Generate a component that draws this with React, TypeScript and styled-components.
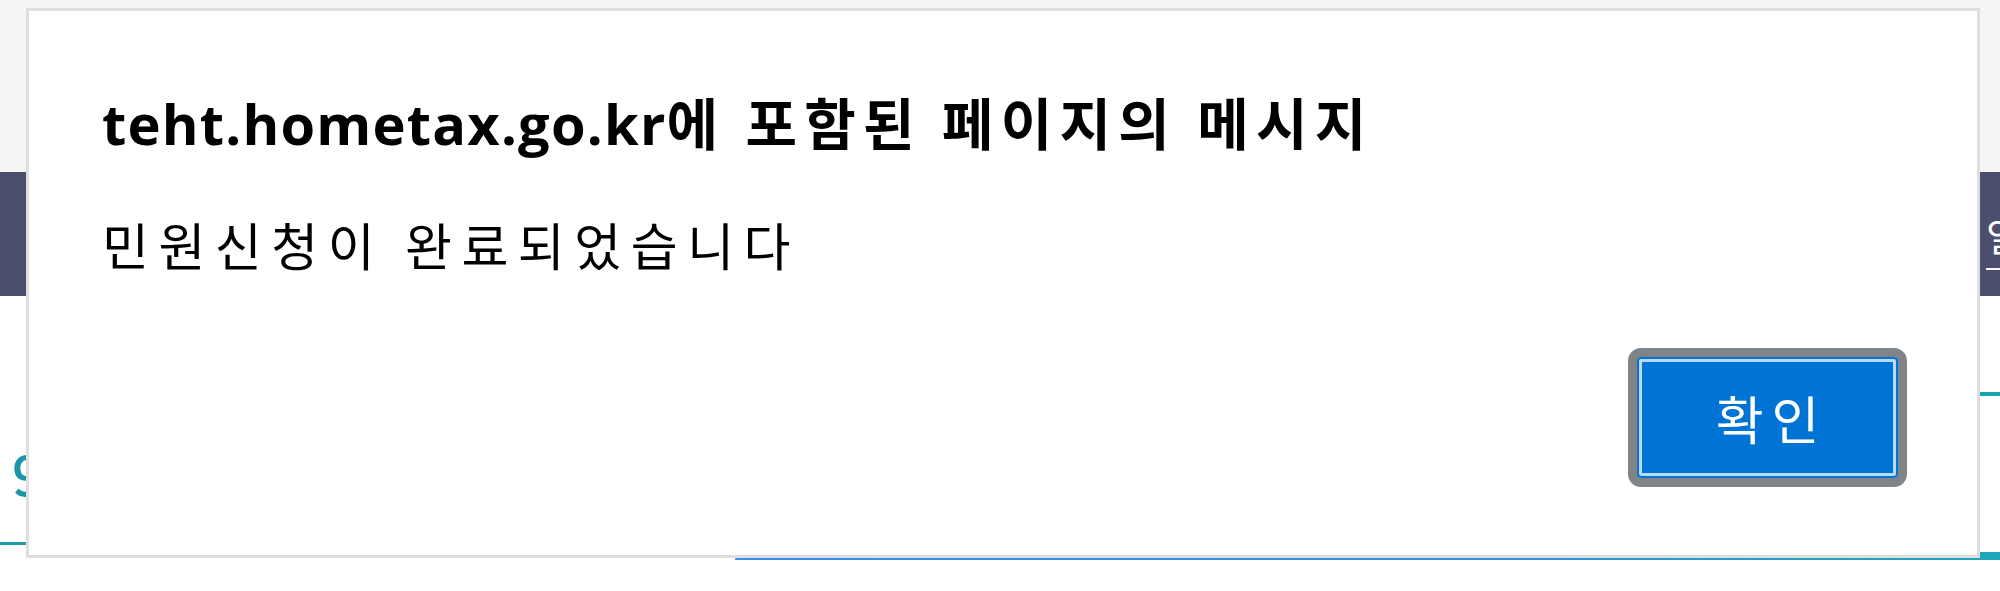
import React from "react";
import styled, { createGlobalStyle } from "styled-components";

const GlobalStyle = createGlobalStyle`
  html, body {
    margin: 0;
    padding: 0;
    background: #ffffff;
    width: 2000px;
    height: 591px;
    overflow: hidden;
  }
  #root { width: 2000px; height: 591px; }
  * { box-sizing: border-box; }
`;

const Page = styled.div`
  position: relative;
  width: 2000px;
  height: 591px;
  display: flex;
  flex-direction: column;
  font-family: "Open Sans", "Noto Sans CJK KR", sans-serif;
  overflow: hidden;
`;

const Header = styled.div`
  height: 172px;
  background: #f5f5f5;
  flex: none;
`;

const Nav = styled.nav`
  height: 124px;
  background: #4b4e6d;
  flex: none;
  display: flex;
  align-items: center;
  padding-left: 1986px;
  overflow: hidden;
`;

const NavItem = styled.span`
  color: #ffffff;
  font-family: "Noto Sans CJK KR", sans-serif;
  font-size: 38px;
  white-space: nowrap;
  padding-bottom: 6px;
  border-bottom: 2px solid #ffffff;
  margin-top: 8px;
`;

const Content = styled.div`
  flex: 1;
  display: flex;
  flex-direction: column;
`;

const Panel = styled.div`
  margin-top: 96px;
  margin-left: 700px;
  border-top: 4px solid #19a3ad;
  height: 50px;
`;

const StatRow = styled.div`
  display: flex;
  align-items: center;
  height: 60px;
  padding-left: 12px;
`;

const StatValue = styled.span`
  color: #1c96a6;
  font-family: "Noto Sans CJK KR", sans-serif;
  font-size: 56px;
  font-weight: 500;
  line-height: 1;
`;

const TabRow = styled.div`
  display: flex;
  align-items: flex-start;
  margin-top: 40px;
`;

const TabLine = styled.div`
  width: 735px;
  flex: none;
  height: 3px;
  background: #1c9aa8;
`;

const ProgressBar = styled.div`
  flex: 1;
  height: 8px;
  margin-top: 10px;
  border-top-left-radius: 14px 8px;
  background: linear-gradient(90deg, #3a8de8 0%, #3492dc 60%, #1ea6b8 100%);
`;

const Dialog = styled.div`
  position: absolute;
  left: 26px;
  top: 8px;
  width: 1954px;
  height: 550px;
  background: #ffffff;
  border: 3px solid #dedede;
  display: flex;
  flex-direction: column;
  padding: 77px 70px 68px 73px;
`;

const Title = styled.h1`
  margin: 0;
  font-size: 56px;
  font-weight: 700;
  line-height: 65px;
  color: #000000;
  white-space: nowrap;
  letter-spacing: 7.3px;
  font-family: "Noto Sans CJK KR", sans-serif;
`;

const Host = styled.span`
  font-family: "Open Sans", sans-serif;
  letter-spacing: 1.2px;
`;

const Message = styled.p`
  margin: 56px 0 0 0;
  font-size: 51px;
  line-height: 64px;
  letter-spacing: 9.5px;
  color: #000000;
  font-family: "Noto Sans CJK KR", sans-serif;
  white-space: nowrap;
`;

const Footer = styled.div`
  margin-top: auto;
  display: flex;
  justify-content: flex-end;
`;

const ConfirmButton = styled.button`
  width: 279px;
  height: 139px;
  border-radius: 13px;
  border: 9px solid #7f8489;
  background: #0074d4;
  box-shadow: inset 0 0 0 2px #0a6fcf, inset 0 0 0 5px #b9daf6;
  color: #ffffff;
  font-family: "Noto Sans CJK KR", sans-serif;
  font-size: 52px;
  letter-spacing: 8px;
  padding: 0 0 0 8px;
  display: flex;
  align-items: center;
  justify-content: center;
  cursor: pointer;
`;

export default function App() {
  return (
    <>
      <GlobalStyle />
      <Page>
        <Header />
        <Nav>
          <NavItem>일</NavItem>
        </Nav>
        <Content>
          <Panel />
          <StatRow>
            <StatValue>9</StatValue>
          </StatRow>
          <TabRow>
            <TabLine />
            <ProgressBar />
          </TabRow>
        </Content>
        <Dialog role="alertdialog">
          <Title>
            <Host>teht.hometax.go.kr</Host>에 포함된 페이지의 메시지
          </Title>
          <Message>민원신청이 완료되었습니다</Message>
          <Footer>
            <ConfirmButton>확인</ConfirmButton>
          </Footer>
        </Dialog>
      </Page>
    </>
  );
}
